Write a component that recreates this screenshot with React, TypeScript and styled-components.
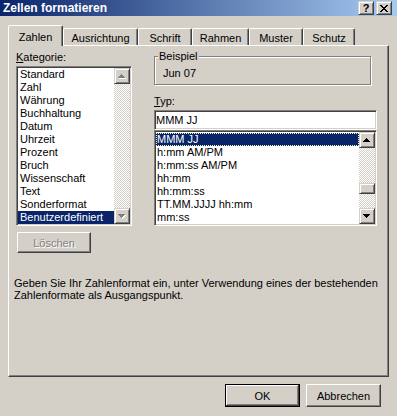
import React from "react";
import styled, { createGlobalStyle, css } from "styled-components";

const FACE = "#d4d0c8";
const SHADOW = "#808080";
const DARK = "#404040";
const HILITE = "#ffffff";
const SELECT = "#0a246a";

const GlobalStyle = createGlobalStyle`
  html, body {
    margin: 0;
    padding: 0;
    background: ${FACE};
  }
`;

const raised = css`
  border: 1px solid;
  border-color: ${FACE} ${DARK} ${DARK} ${FACE};
  box-shadow: inset 1px 1px ${HILITE}, inset -1px -1px ${SHADOW};
`;

const sunken = css`
  border: 1px solid;
  border-color: ${SHADOW} ${HILITE} ${HILITE} ${SHADOW};
  box-shadow: inset 1px 1px ${DARK}, inset -1px -1px ${FACE};
  padding: 1px;
`;

const tabs = [
  { label: "Zahlen", width: 55 },
  { label: "Ausrichtung", width: 75 },
  { label: "Schrift", width: 54 },
  { label: "Rahmen", width: 57 },
  { label: "Muster", width: 54 },
  { label: "Schutz", width: 52 },
];

const categories = [
  "Standard",
  "Zahl",
  "Währung",
  "Buchhaltung",
  "Datum",
  "Uhrzeit",
  "Prozent",
  "Bruch",
  "Wissenschaft",
  "Text",
  "Sonderformat",
  "Benutzerdefiniert",
];

const formats = [
  "MMM JJ",
  "h:mm AM/PM",
  "h:mm:ss AM/PM",
  "hh:mm",
  "hh:mm:ss",
  "TT.MM.JJJJ hh:mm",
  "mm:ss",
];

const ARROW_UP = "M3 0h1v1h-1z M2 1h3v1h-3z M1 2h5v1h-5z M0 3h7v1h-7z";
const ARROW_DOWN = "M0 0h7v1h-7z M1 1h5v1h-5z M2 2h3v1h-3z M3 3h1v1h-1z";
const CLOSE_X =
  "M0 0h2v1h-2z M6 0h2v1h-2z M1 1h2v1h-2z M5 1h2v1h-2z M2 2h4v1h-4z M3 3h2v1h-2z M2 4h4v1h-4z M1 5h2v1h-2z M5 5h2v1h-2z M0 6h2v1h-2z M6 6h2v1h-2z";

function Arrow({ dir, disabled }: { dir: "up" | "down"; disabled?: boolean }) {
  const d = dir === "up" ? ARROW_UP : ARROW_DOWN;
  return (
    <svg width="8" height="5" viewBox="0 0 8 5" shapeRendering="crispEdges">
      {disabled && <path d={d} fill={HILITE} transform="translate(1 1)" />}
      <path d={d} fill={disabled ? SHADOW : "#000"} />
    </svg>
  );
}

function Scroller({ disabled, thumbAt }: { disabled?: boolean; thumbAt?: number }) {
  return (
    <Scrollbar>
      <ScrollButton>
        <Arrow dir="up" disabled={disabled} />
      </ScrollButton>
      <Track>{thumbAt !== undefined && <Thumb $offset={thumbAt} />}</Track>
      <ScrollButton>
        <Arrow dir="down" disabled={disabled} />
      </ScrollButton>
    </Scrollbar>
  );
}

export default function App() {
  return (
    <Window>
      <GlobalStyle />
      <TitleBar>
        <Title>Zellen formatieren</Title>
        <CaptionButtons>
          <CaptionButton>?</CaptionButton>
          <CaptionButton>
            <svg width="8" height="7" viewBox="0 0 8 7" shapeRendering="crispEdges">
              <path d={CLOSE_X} fill="#000" />
            </svg>
          </CaptionButton>
        </CaptionButtons>
      </TitleBar>

      <Body>
        <TabStrip>
          {tabs.map((t, i) => (
            <Tab key={t.label} $width={t.width} $active={i === 0}>
              {t.label}
            </Tab>
          ))}
        </TabStrip>

        <Panel>
          <TopRow>
            <Column>
              <Label>
                <u>K</u>ategorie:
              </Label>
              <ListBox $height={160}>
                <Items $padTop={0}>
                  {categories.map((c) => (
                    <Item key={c} $indent={2} $selected={c === "Benutzerdefiniert"}>
                      {c}
                    </Item>
                  ))}
                </Items>
                <Scroller disabled />
              </ListBox>
              <PushButton $width={74} $disabled>
                Löschen
              </PushButton>
            </Column>

            <Column>
              <GroupBox>
                <GroupLabel>Beispiel</GroupLabel>
                <Sample>Jun 07</Sample>
              </GroupBox>
              <TypLabel>
                <u>T</u>yp:
              </TypLabel>
              <TextField>MMM JJ</TextField>
              <ListBox $height={96}>
                <Items $padTop={1}>
                  {formats.map((f, i) => (
                    <Item key={f} $indent={1} $selected={i === 0} $focused={i === 0}>
                      {f}
                    </Item>
                  ))}
                </Items>
                <Scroller thumbAt={35} />
              </ListBox>
            </Column>
          </TopRow>

          <Description>
            Geben Sie Ihr Zahlenformat ein, unter Verwendung eines der bestehenden
            <br />
            Zahlenformate als Ausgangspunkt.
          </Description>
        </Panel>

        <Footer>
          <PushButton $width={75} $height={23} $default>
            OK
          </PushButton>
          <PushButton $width={75} $height={23}>
            Abbrechen
          </PushButton>
        </Footer>
      </Body>
    </Window>
  );
}

const Window = styled.div`
  width: 397px;
  height: 416px;
  display: flex;
  flex-direction: column;
  overflow: hidden;
  background: ${FACE};
  font-family: "Liberation Sans", Arial, sans-serif;
  font-size: 11px;
  color: #000;
`;

const TitleBar = styled.div`
  flex: none;
  height: 16px;
  display: flex;
  align-items: flex-start;
  justify-content: space-between;
  padding: 0 5px 0 3px;
  background: linear-gradient(to right, ${SELECT}, #a6caf0);
`;

const Title = styled.div`
  color: #fff;
  font-weight: bold;
  font-size: 12px;
  line-height: 16px;
`;

const CaptionButtons = styled.div`
  display: flex;
  gap: 2px;
  margin-top: 1px;
`;

const CaptionButton = styled.div`
  box-sizing: border-box;
  width: 16px;
  height: 14px;
  display: flex;
  align-items: center;
  justify-content: center;
  background: ${FACE};
  font-weight: bold;
  font-size: 11px;
  line-height: 1;
  ${raised}
`;

const Body = styled.div`
  display: flex;
  flex-direction: column;
  padding: 9px 8px 0 8px;
`;

const TabStrip = styled.div`
  position: relative;
  z-index: 1;
  display: flex;
  align-items: flex-end;
  height: 20px;
`;

const Tab = styled.div<{ $width: number; $active?: boolean }>`
  box-sizing: border-box;
  width: ${(p) => p.$width}px;
  height: ${(p) => (p.$active ? 21 : 17)}px;
  margin-bottom: ${(p) => (p.$active ? -1 : 0)}px;
  display: flex;
  align-items: center;
  justify-content: center;
  padding-top: 2px;
  background: ${FACE};
  border: 1px solid;
  border-bottom: none;
  border-color: ${HILITE} ${DARK} transparent ${HILITE};
  border-radius: 2px 2px 0 0;
  box-shadow: inset -1px 0 ${SHADOW};
  white-space: nowrap;
`;

const Panel = styled.div`
  box-sizing: border-box;
  width: 381px;
  height: 332px;
  display: flex;
  flex-direction: column;
  padding: 5px 0 0 5px;
  border: 1px solid;
  border-color: ${HILITE} ${DARK} ${DARK} ${HILITE};
  box-shadow: inset -1px -1px ${SHADOW};
`;

const TopRow = styled.div`
  display: grid;
  grid-template-columns: 116px 223px;
  column-gap: 22px;
  padding-left: 2px;
`;

const Column = styled.div`
  display: flex;
  flex-direction: column;
  align-items: flex-start;
`;

const Label = styled.div`
  height: 13px;
  line-height: 13px;
  margin-bottom: 2px;
`;

const TypLabel = styled(Label)`
  margin-top: 10px;
`;

const ListBox = styled.div<{ $height: number }>`
  box-sizing: border-box;
  width: 100%;
  height: ${(p) => p.$height}px;
  display: flex;
  background: #fff;
  ${sunken}
`;

const Items = styled.div<{ $padTop: number }>`
  flex: 1;
  min-width: 0;
  display: flex;
  flex-direction: column;
  padding-top: ${(p) => p.$padTop}px;
  overflow: hidden;
`;

const Item = styled.div<{ $indent: number; $selected?: boolean; $focused?: boolean }>`
  flex: none;
  height: 13px;
  line-height: 13px;
  padding-left: ${(p) => p.$indent}px;
  white-space: nowrap;
  background: ${(p) => (p.$selected ? SELECT : "transparent")};
  color: ${(p) => (p.$selected ? "#fff" : "#000")};
  ${(p) =>
    p.$focused &&
    css`
      outline: 1px dotted #f4f4c0;
      outline-offset: -1px;
    `}
`;

const Scrollbar = styled.div`
  flex: none;
  width: 16px;
  display: flex;
  flex-direction: column;
`;

const ScrollButton = styled.div`
  box-sizing: border-box;
  flex: none;
  height: 16px;
  display: flex;
  align-items: center;
  justify-content: center;
  background: ${FACE};
  ${raised}
`;

const Track = styled.div`
  flex: 1;
  display: flex;
  flex-direction: column;
  background-image: conic-gradient(${HILITE} 25%, ${FACE} 0 50%, ${HILITE} 0 75%, ${FACE} 0);
  background-size: 2px 2px;
`;

const Thumb = styled.div<{ $offset: number }>`
  box-sizing: border-box;
  flex: none;
  height: 11px;
  margin-top: ${(p) => p.$offset}px;
  background: ${FACE};
  ${raised}
`;

const PushButton = styled.div<{
  $width: number;
  $height?: number;
  $disabled?: boolean;
  $default?: boolean;
}>`
  box-sizing: border-box;
  width: ${(p) => p.$width}px;
  height: ${(p) => p.$height ?? 21}px;
  display: flex;
  align-items: center;
  justify-content: center;
  background: ${FACE};
  border: 1px solid;
  border-color: ${HILITE} ${DARK} ${DARK} ${HILITE};
  box-shadow: inset -1px -1px ${SHADOW};
  ${(p) =>
    p.$default &&
    css`
      border-color: #000;
      box-shadow: inset -1px -1px ${DARK}, inset 1px 1px ${HILITE}, inset -2px -2px ${SHADOW};
    `}
  ${(p) =>
    p.$disabled &&
    css`
      margin-top: 6px;
      margin-left: 1px;
      color: ${SHADOW};
      text-shadow: 1px 1px 0 ${HILITE};
    `}
`;

const GroupBox = styled.div`
  position: relative;
  box-sizing: border-box;
  width: 217px;
  height: 29px;
  margin-top: 5px;
  padding: 10px 0 0 8px;
  border: 1px solid ${SHADOW};
  box-shadow: inset 1px 1px ${HILITE}, 1px 1px 0 ${HILITE};
`;

const GroupLabel = styled.span`
  position: absolute;
  top: -7px;
  left: 3px;
  padding: 0 1px;
  line-height: 13px;
  background: ${FACE};
`;

const Sample = styled.div`
  line-height: 13px;
`;

const TextField = styled.div`
  box-sizing: border-box;
  width: 100%;
  height: 20px;
  line-height: 16px;
  padding-left: 2px;
  background: #fff;
  ${sunken}
`;

const Description = styled.p`
  margin: 24px 0 0 0;
  line-height: 12px;
  white-space: nowrap;
`;

const Footer = styled.div`
  display: flex;
  justify-content: flex-end;
  gap: 6px;
  margin-top: 7px;
  padding-right: 8px;
`;
